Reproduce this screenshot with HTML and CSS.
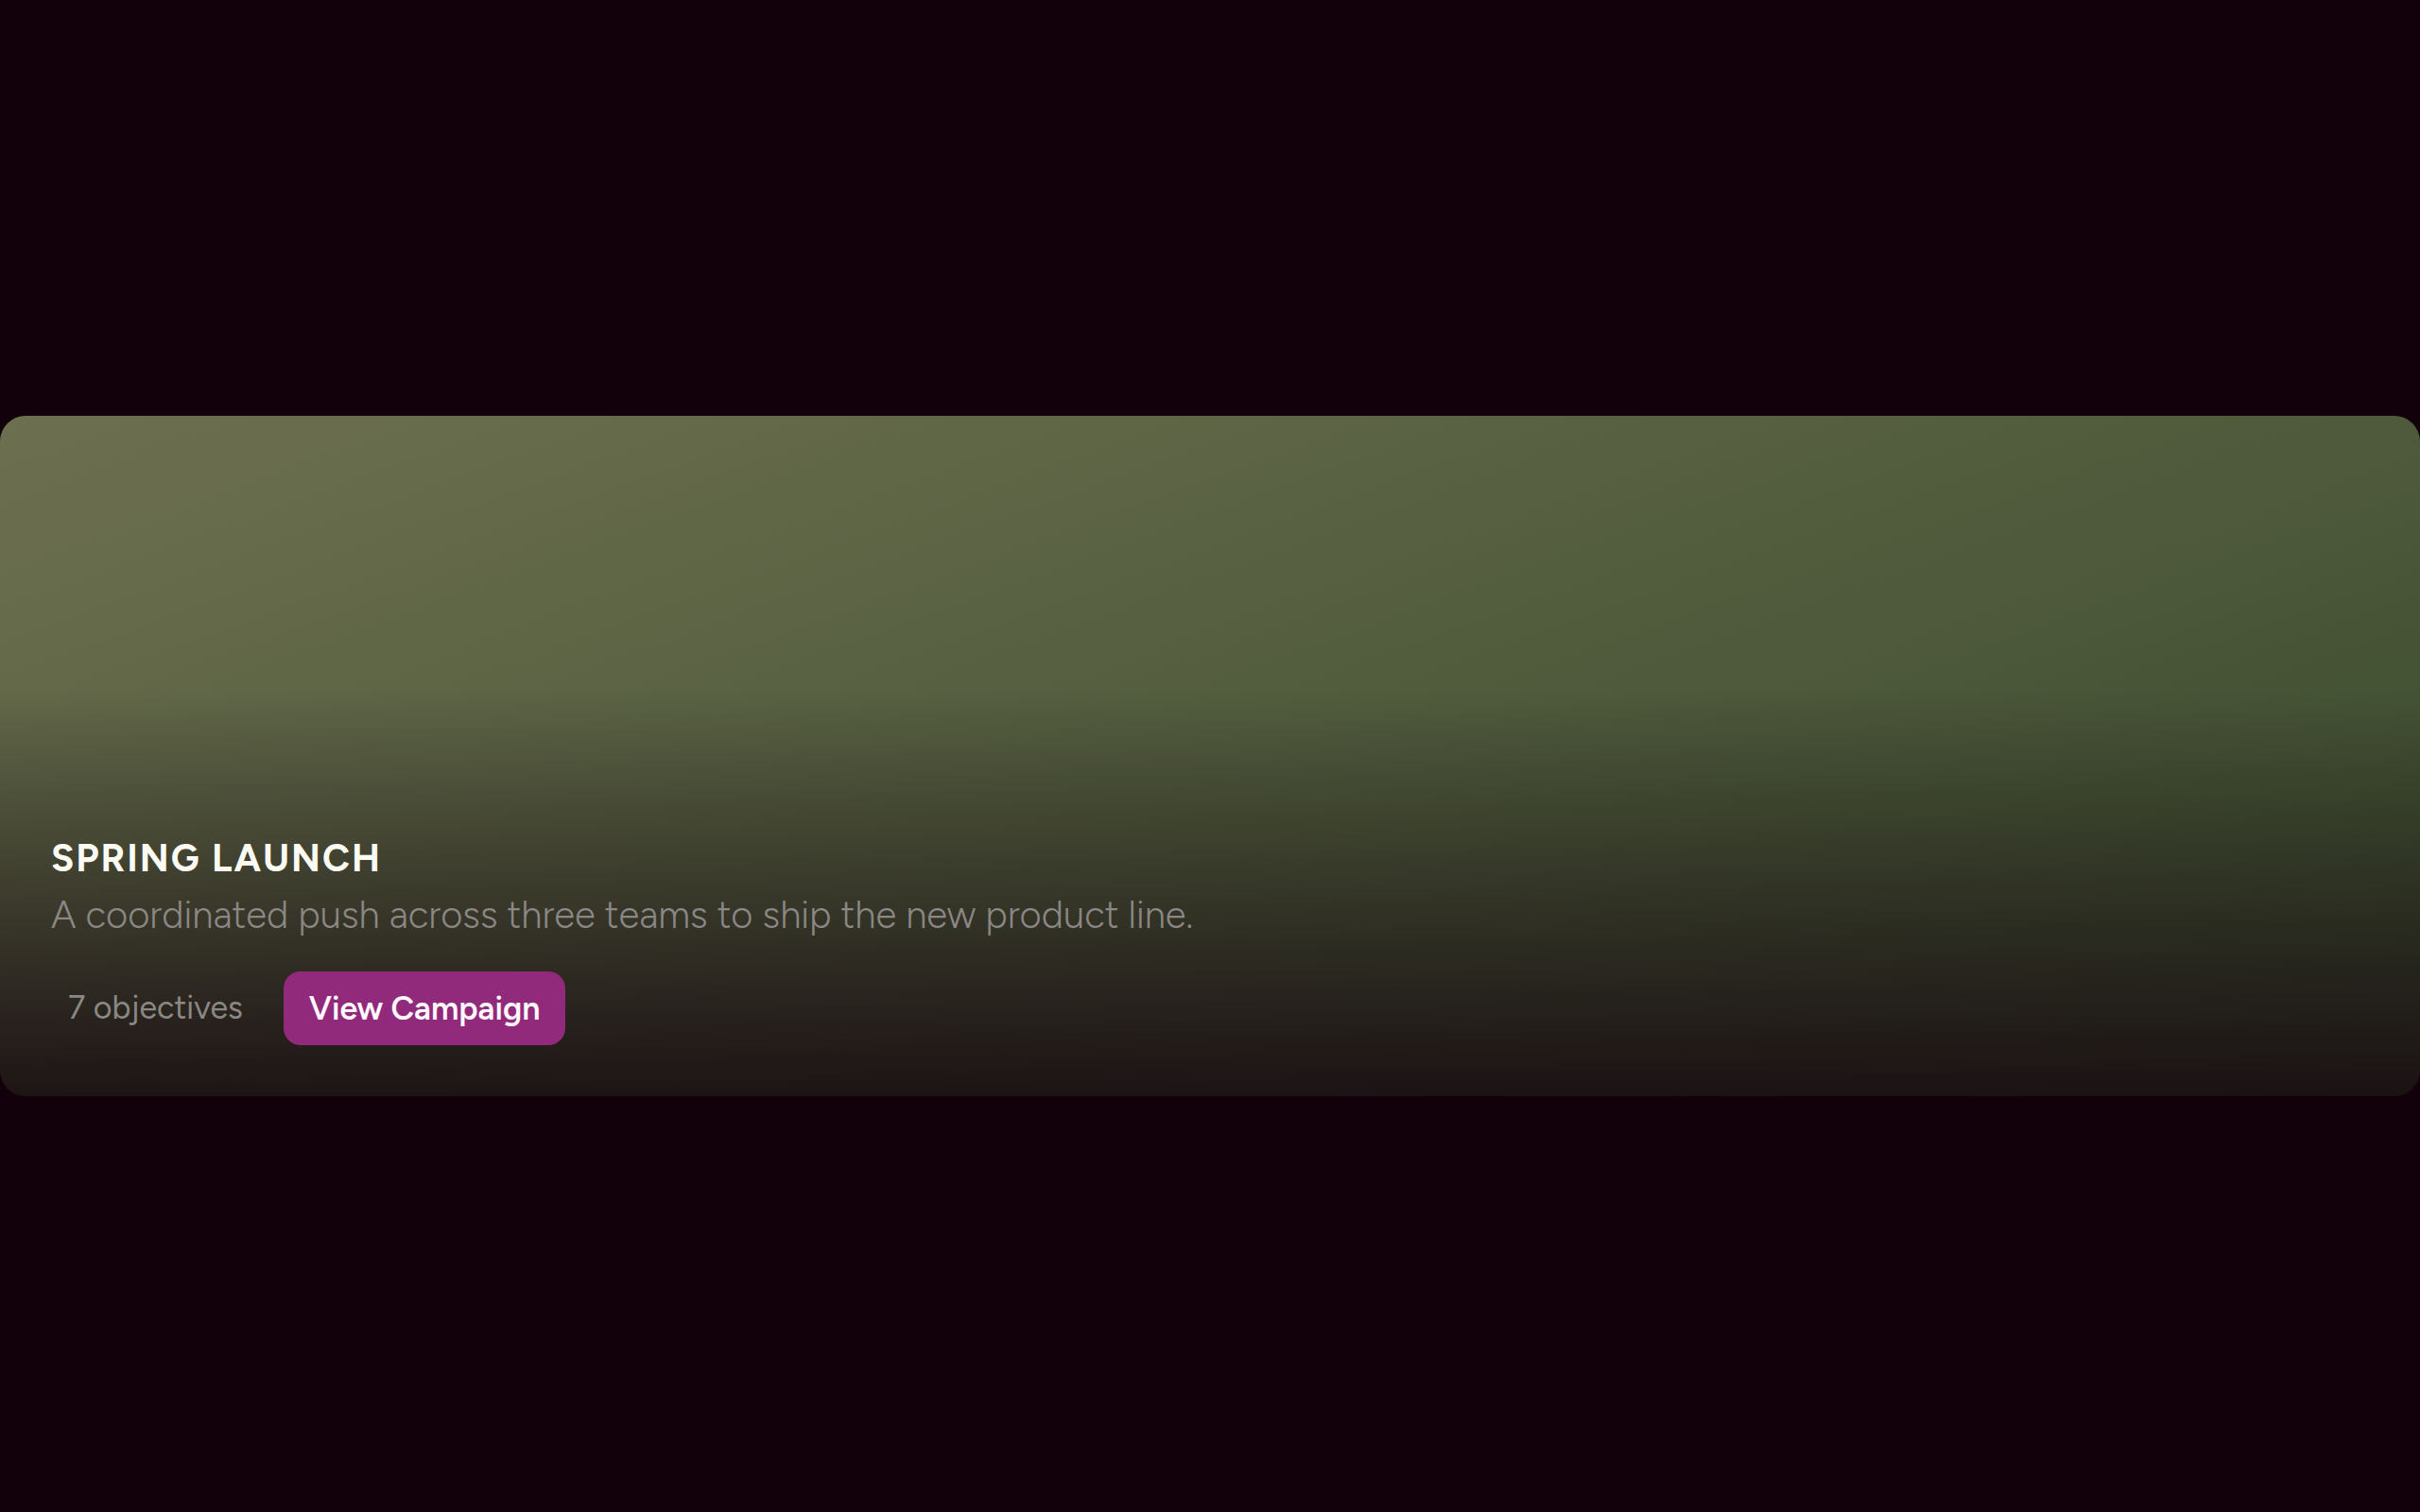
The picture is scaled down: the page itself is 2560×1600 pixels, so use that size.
FILE: index.html
```
<!DOCTYPE html>
<html lang="en">
<head>
<meta charset="utf-8">
<title>Spring Launch</title>
<link rel="stylesheet" href="styles.css">
</head>
<body>
<main class="page">
  <section class="campaign">
    <h1 class="title">Spring Launch</h1>
    <p class="summary">A coordinated push across three teams to ship the new product line.</p>
    <div class="actions">
      <span class="count">7 objectives</span>
      <button class="button" type="button">View Campaign</button>
    </div>
  </section>
</main>
</body>
</html>
```
FILE: styles.css
```
* {
  box-sizing: border-box;
}

body {
  margin: 0;
  background: #12000a;
  color: #fbfbf4;
  font-family: Figtree, Lato, sans-serif;
}

.page {
  display: flex;
  align-items: center;
  min-height: 100vh;
}

.campaign {
  display: flex;
  flex: 1;
  flex-direction: column;
  justify-content: flex-end;
  min-height: 45vh;
  padding: 54px;
  border-radius: 27px;
  background:
    linear-gradient(180deg, rgba(24, 12, 17, 0) 40%, rgba(24, 12, 17, 0.9) 100%),
    linear-gradient(160deg, #6d7050 0%, #36492b 100%);
}

.title {
  margin: 0;
  font-size: 40px;
  font-weight: 700;
  line-height: 60px;
  letter-spacing: 2px;
  text-transform: uppercase;
}

.summary {
  margin: 0;
  color: #8a8785;
  font-size: 40px;
  font-weight: 300;
  line-height: 60px;
}

.actions {
  display: flex;
  align-items: center;
  gap: 25px;
  margin-top: 30px;
}

.count {
  padding: 0 18px;
  color: #8a8785;
  font-size: 34px;
  line-height: 54px;
}

.button {
  height: 78px;
  padding: 0 27px;
  border: 0;
  border-radius: 18px;
  background: #922a7c;
  color: #fff8fc;
  font: inherit;
  font-size: 34px;
  font-weight: 600;
}
```
